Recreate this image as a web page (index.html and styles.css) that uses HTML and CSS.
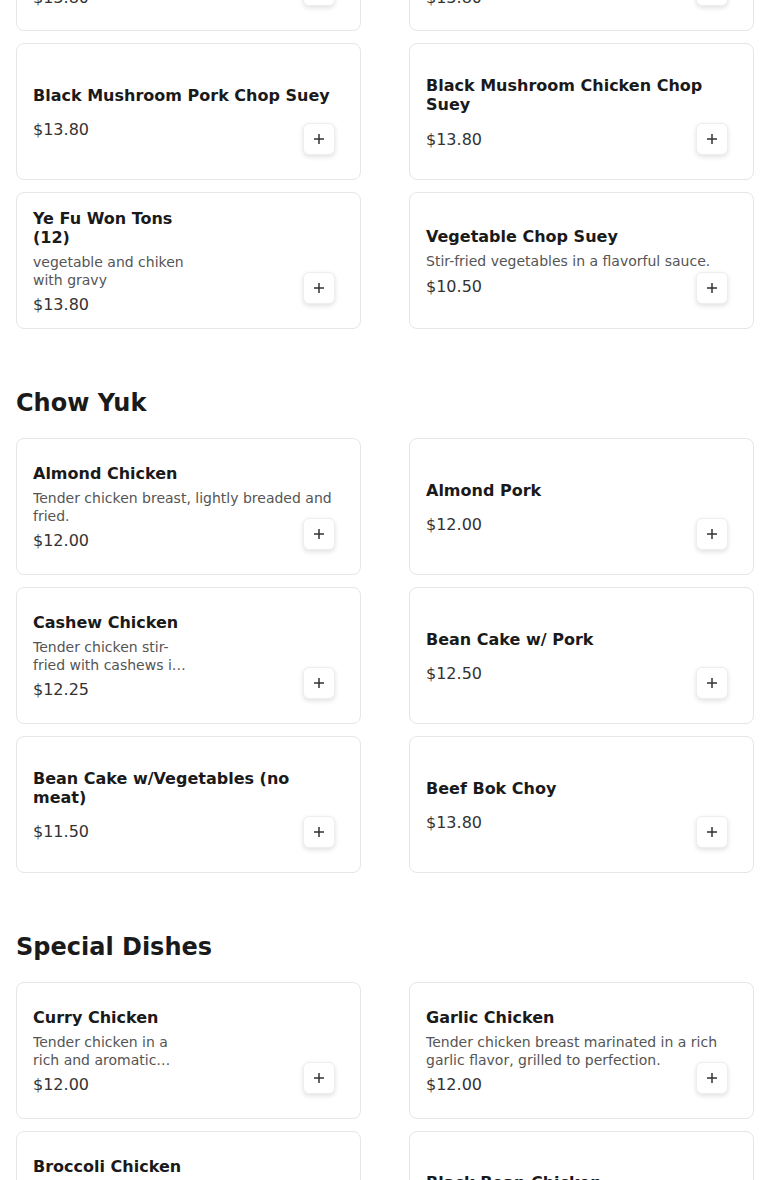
FILE: index.html
```html
<!DOCTYPE html>
<html>
  <head>
    <title>Menu</title>
    <link rel="stylesheet" href="styles.css">
  </head>
  <body>
    <div class="menu">
      <section class="category first">
        <div class="grid">
          <div class="card">
            <div class="info">
              <div class="name">Mushroom Pork Chop Suey</div>
              <div class="desc">Sliced pork stir-fried with mushrooms and fresh vegetables in a light brown sauce.</div>
              <div class="price">$13.80</div>
            </div>
            <button class="add"><svg viewBox="0 0 12 12"><path d="M6 1v10M1 6h10"/></svg></button>
          </div>
          <div class="card">
            <div class="info">
              <div class="name">Mushroom Chicken Chop Suey</div>
              <div class="desc">Sliced chicken stir-fried with mushrooms and fresh vegetables in a light brown sauce.</div>
              <div class="price">$13.80</div>
            </div>
            <button class="add"><svg viewBox="0 0 12 12"><path d="M6 1v10M1 6h10"/></svg></button>
          </div>
          <div class="card">
            <div class="info">
              <div class="name">Black Mushroom Pork Chop Suey</div>
              <div class="price">$13.80</div>
            </div>
            <button class="add"><svg viewBox="0 0 12 12"><path d="M6 1v10M1 6h10"/></svg></button>
          </div>
          <div class="card">
            <div class="info">
              <div class="name">Black Mushroom Chicken Chop Suey</div>
              <div class="price">$13.80</div>
            </div>
            <button class="add"><svg viewBox="0 0 12 12"><path d="M6 1v10M1 6h10"/></svg></button>
          </div>
          <div class="card">
            <div class="info short">
              <div class="name">Ye Fu Won Tons (12)</div>
              <div class="desc">vegetable and chiken with gravy</div>
              <div class="price">$13.80</div>
            </div>
            <button class="add"><svg viewBox="0 0 12 12"><path d="M6 1v10M1 6h10"/></svg></button>
          </div>
          <div class="card">
            <div class="info">
              <div class="name">Vegetable Chop Suey</div>
              <div class="desc">Stir-fried vegetables in a flavorful sauce.</div>
              <div class="price">$10.50</div>
            </div>
            <button class="add"><svg viewBox="0 0 12 12"><path d="M6 1v10M1 6h10"/></svg></button>
          </div>
        </div>
      </section>

      <section class="category">
        <h2>Chow Yuk</h2>
        <div class="grid">
          <div class="card">
            <div class="info">
              <div class="name">Almond Chicken</div>
              <div class="desc">Tender chicken breast, lightly breaded and fried.</div>
              <div class="price">$12.00</div>
            </div>
            <button class="add"><svg viewBox="0 0 12 12"><path d="M6 1v10M1 6h10"/></svg></button>
          </div>
          <div class="card">
            <div class="info">
              <div class="name">Almond Pork</div>
              <div class="price">$12.00</div>
            </div>
            <button class="add"><svg viewBox="0 0 12 12"><path d="M6 1v10M1 6h10"/></svg></button>
          </div>
          <div class="card">
            <div class="info short">
              <div class="name">Cashew Chicken</div>
              <div class="desc">Tender chicken stir-fried with cashews in a savory brown sauce.</div>
              <div class="price">$12.25</div>
            </div>
            <button class="add"><svg viewBox="0 0 12 12"><path d="M6 1v10M1 6h10"/></svg></button>
          </div>
          <div class="card">
            <div class="info">
              <div class="name">Bean Cake w/ Pork</div>
              <div class="price">$12.50</div>
            </div>
            <button class="add"><svg viewBox="0 0 12 12"><path d="M6 1v10M1 6h10"/></svg></button>
          </div>
          <div class="card">
            <div class="info">
              <div class="name">Bean Cake w/Vegetables (no meat)</div>
              <div class="price">$11.50</div>
            </div>
            <button class="add"><svg viewBox="0 0 12 12"><path d="M6 1v10M1 6h10"/></svg></button>
          </div>
          <div class="card">
            <div class="info">
              <div class="name">Beef Bok Choy</div>
              <div class="price">$13.80</div>
            </div>
            <button class="add"><svg viewBox="0 0 12 12"><path d="M6 1v10M1 6h10"/></svg></button>
          </div>
        </div>
      </section>

      <section class="category">
        <h2>Special Dishes</h2>
        <div class="grid">
          <div class="card">
            <div class="info short">
              <div class="name">Curry Chicken</div>
              <div class="desc">Tender chicken in a rich and aromatic curry sauce.</div>
              <div class="price">$12.00</div>
            </div>
            <button class="add"><svg viewBox="0 0 12 12"><path d="M6 1v10M1 6h10"/></svg></button>
          </div>
          <div class="card">
            <div class="info">
              <div class="name">Garlic Chicken</div>
              <div class="desc">Tender chicken breast marinated in a rich garlic flavor, grilled to perfection.</div>
              <div class="price">$12.00</div>
            </div>
            <button class="add"><svg viewBox="0 0 12 12"><path d="M6 1v10M1 6h10"/></svg></button>
          </div>
          <div class="card">
            <div class="info short">
              <div class="name">Broccoli Chicken</div>
              <div class="desc">Tender chicken stir-fried with fresh broccoli.</div>
              <div class="price">$12.00</div>
            </div>
            <button class="add"><svg viewBox="0 0 12 12"><path d="M6 1v10M1 6h10"/></svg></button>
          </div>
          <div class="card">
            <div class="info">
              <div class="name">Black Bean Chicken</div>
              <div class="price">$12.00</div>
            </div>
            <button class="add"><svg viewBox="0 0 12 12"><path d="M6 1v10M1 6h10"/></svg></button>
          </div>
        </div>
      </section>
    </div>
  </body>
</html>
```

FILE: styles.css
```css
body {
  margin: 0;
  background-color: #fff;
  font-family: "DejaVu Sans", sans-serif;
  color: #1a1a1a;
}

.menu {
  padding: 0 16px;
}

.category {
  margin-top: 60px;
}

.category.first {
  margin-top: -106px;
}

.category h2 {
  margin: 0 0 20px;
  font-size: 24px;
  line-height: 1.2;
  font-weight: bold;
  color: #1a1a1a;
}

.grid {
  display: grid;
  grid-template-columns: repeat(2, 345px);
  column-gap: 48px;
  row-gap: 12px;
}

.card {
  position: relative;
  box-sizing: border-box;
  height: 137px;
  padding: 17px 16px 15px;
  border: 1px solid #e6e6e6;
  border-radius: 8px;
  background: #fff;
  display: flex;
  flex-direction: column;
  justify-content: center;
}

.info {
  display: flex;
  flex-direction: column;
}

.info.short {
  max-width: 160px;
}

.name {
  font-size: 16px;
  font-weight: bold;
  line-height: 1.2;
  margin-bottom: 7px;
}

.desc {
  font-size: 14px;
  line-height: 1.25;
  color: #555;
  display: -webkit-box;
  -webkit-line-clamp: 2;
  -webkit-box-orient: vertical;
  overflow: hidden;
}

.price {
  font-size: 16px;
  line-height: 1.2;
  color: #333;
  margin-top: 8px;
}

.desc + .price {
  margin-top: 6px;
}

.add {
  position: absolute;
  right: 25px;
  bottom: 24px;
  width: 32px;
  height: 32px;
  padding: 0;
  border: 1px solid #eee;
  border-radius: 6px;
  background: #fff;
  box-shadow: 0 2px 5px rgba(0, 0, 0, 0.12);
  display: flex;
  align-items: center;
  justify-content: center;
  cursor: pointer;
}

.add svg {
  width: 12px;
  height: 12px;
  fill: none;
  stroke: #333;
  stroke-width: 1.5;
}
```
